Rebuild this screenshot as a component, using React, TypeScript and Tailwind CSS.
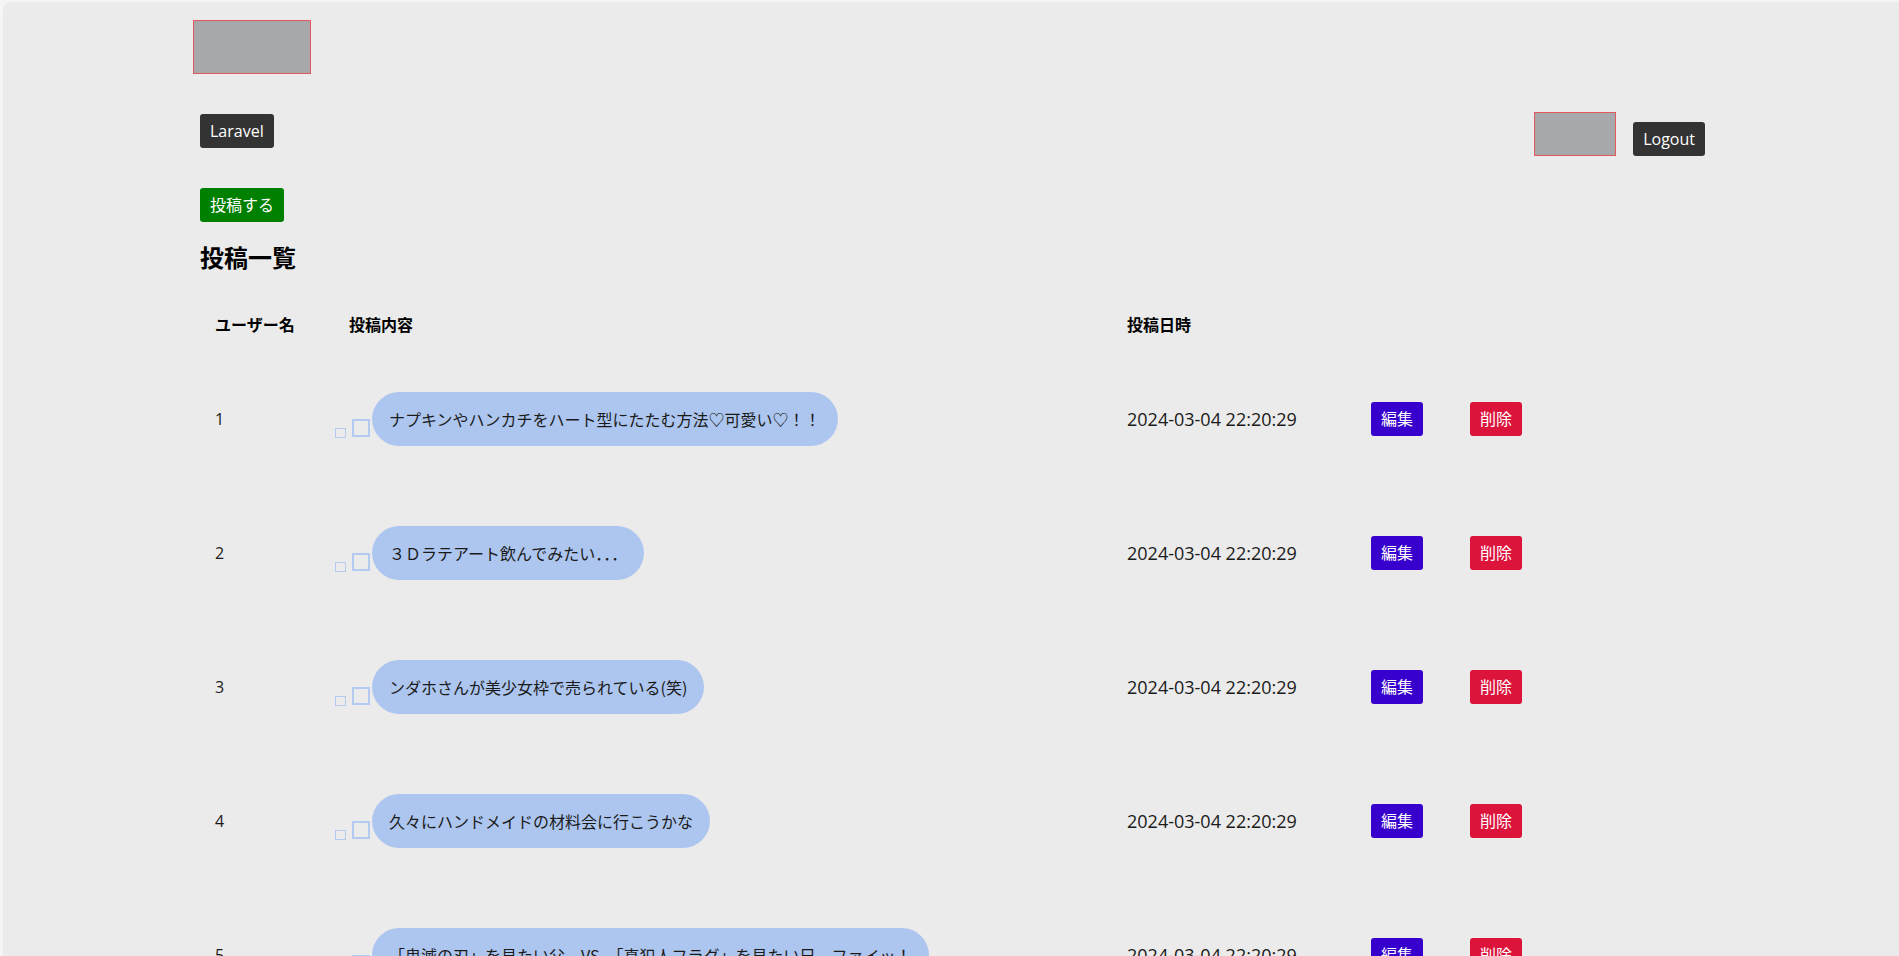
const posts = [
  { id: 1, body: 'ナプキンやハンカチをハート型にたたむ方法♡可愛い♡！！', date: '2024-03-04 22:20:29' },
  { id: 2, body: '３Ｄラテアート飲んでみたい．．．', date: '2024-03-04 22:20:29' },
  { id: 3, body: 'ンダホさんが美少女枠で売られている(笑)', date: '2024-03-04 22:20:29' },
  { id: 4, body: '久々にハンドメイドの材料会に行こうかな', date: '2024-03-04 22:20:29' },
  { id: 5, body: '「鬼滅の刃」を見たい父　VS　「真犯人フラグ」を見たい兄　ファイッ！', date: '2024-03-04 22:20:29' },
];

function Placeholder({ className }: { className: string }) {
  return <div className={`bg-[#a7a8ab] border border-[#e2585c] ${className}`} />;
}

export default function App() {
  return (
    <div className="min-h-screen bg-[#f5f5f5] pt-[2px] pl-[3px] font-['Open_Sans','Noto_Sans_CJK_JP',sans-serif] text-[16px] text-[#1a1a1a]">
      <div className="min-h-[954px] rounded-tl-[8px] bg-[#ebebeb] pb-10">
        {/* Logo */}
        <div className="pl-[190px] pt-[18px]">
          <Placeholder className="w-[118px] h-[54px]" />
        </div>

        <div className="pl-[197px] pr-[194px]">
          {/* Nav */}
          <nav className="mt-[38px] flex items-start justify-between">
            <button className="mt-[2px] h-[34px] px-[10px] rounded-[3px] bg-[#333333] text-white leading-none">
              Laravel
            </button>
            <div className="flex items-end gap-[17px]">
              <Placeholder className="w-[82px] h-[44px]" />
              <button className="h-[34px] px-[10px] rounded-[3px] bg-[#333333] text-white leading-none">
                Logout
              </button>
            </div>
          </nav>

          <button className="mt-[32px] h-[34px] px-[10px] rounded-[3px] bg-[#008000] text-white leading-none">
            投稿する
          </button>

          <h2 className="mt-[20px] text-[24px] leading-[32px] font-bold text-black">投稿一覧</h2>

          {/* Table */}
          <div className="mt-[24px] grid grid-cols-[134px_778px_244px_99px_1fr]">
            <div className="h-[54px] flex items-center pl-[15px] font-bold text-black">ユーザー名</div>
            <div className="h-[54px] flex items-center pl-[15px] font-bold text-black">投稿内容</div>
            <div className="h-[54px] flex items-center pl-[15px] font-bold text-black">投稿日時</div>
            <div />
            <div />

            {posts.map((p) => (
              <div key={p.id} className="contents">
                <div className="h-[134px] flex items-center pl-[15px]">{p.id}</div>
                <div className="h-[134px] flex items-center pl-[1px]">
                  <div className="flex items-start">
                    <div className="mt-[36px] w-[11px] h-[10px] border-[1.5px] border-[#b4caef]" />
                    <div className="ml-[6px] mt-[27px] w-[18px] h-[18px] border-2 border-[#b4caef]" />
                    <div className="ml-[2px] h-[54px] px-[17px] rounded-full bg-[#adc6ef] flex items-center whitespace-nowrap font-['Noto_Sans_CJK_JP',sans-serif]">
                      {p.body}
                    </div>
                  </div>
                </div>
                <div className="h-[134px] flex items-center pl-[15px] text-[18px]">{p.date}</div>
                <div className="h-[134px] flex items-center pl-[15px]">
                  <button className="h-[34px] px-[10px] rounded-[3px] bg-[#3800cc] text-white leading-none">編集</button>
                </div>
                <div className="h-[134px] flex items-center pl-[15px]">
                  <button className="h-[34px] px-[10px] rounded-[3px] bg-[#dc143c] text-white leading-none">削除</button>
                </div>
              </div>
            ))}
          </div>
        </div>
      </div>
    </div>
  );
}
